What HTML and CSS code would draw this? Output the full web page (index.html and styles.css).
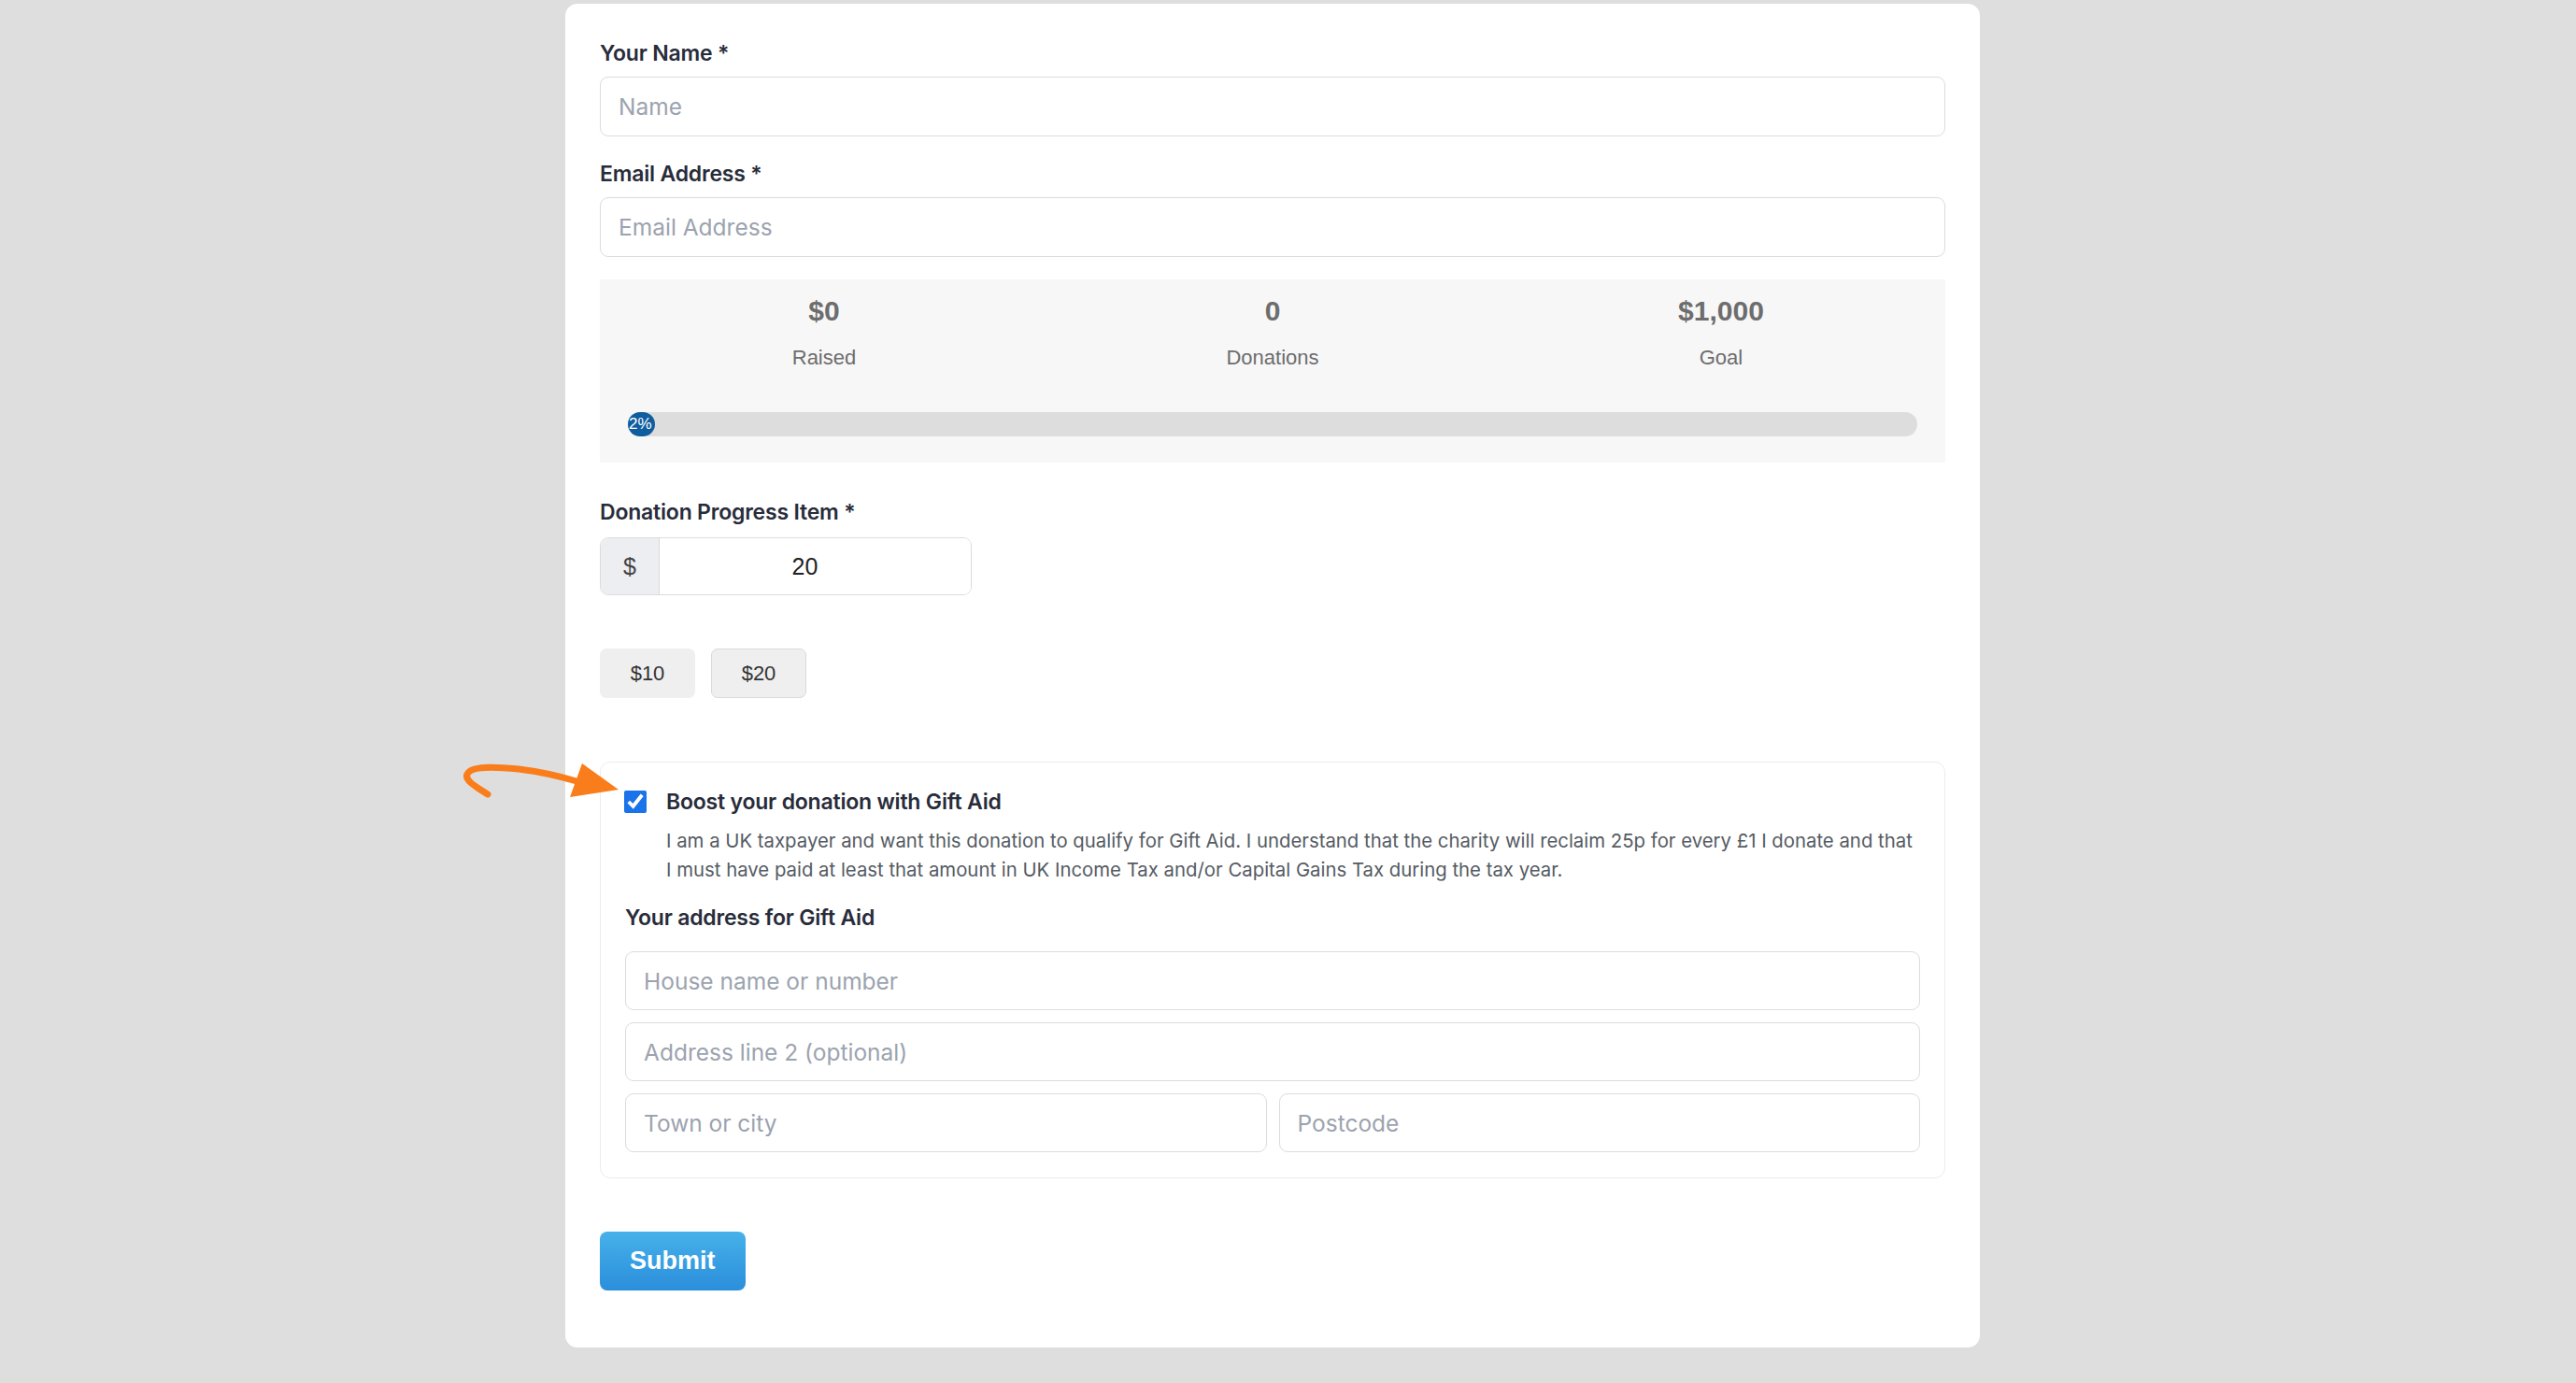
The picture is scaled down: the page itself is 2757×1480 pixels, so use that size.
FILE: index.html
```html
<!DOCTYPE html>
<html lang="en">
<head>
    <meta charset="UTF-8">
    <meta name="viewport" content="width=device-width, initial-scale=1.0">
    <title>Donation Form</title>
    <link rel="stylesheet" href="styles.css">
</head>
<body>
    <form class="donation-card">
        <div class="field">
            <label class="field-label" for="donorName">Your Name *</label>
            <input class="text-input" type="text" id="donorName" placeholder="Name">
        </div>
        <div class="field">
            <label class="field-label" for="donorEmail">Email Address *</label>
            <input class="text-input" type="email" id="donorEmail" placeholder="Email Address">
        </div>

        <div class="progress-panel">
            <div class="stats">
                <div class="stat">
                    <div class="stat-value">$0</div>
                    <div class="stat-label">Raised</div>
                </div>
                <div class="stat">
                    <div class="stat-value">0</div>
                    <div class="stat-label">Donations</div>
                </div>
                <div class="stat">
                    <div class="stat-value">$1,000</div>
                    <div class="stat-label">Goal</div>
                </div>
            </div>
            <div class="progress-track">
                <div class="progress-fill" style="width: 2%">2%</div>
            </div>
        </div>

        <div class="field amount-field">
            <label class="field-label" for="amount">Donation Progress Item *</label>
            <div class="amount-group">
                <span class="currency">$</span>
                <input class="amount-input" type="text" id="amount" value="20">
            </div>
        </div>

        <div class="preset-buttons">
            <button type="button" class="preset">$10</button>
            <button type="button" class="preset selected">$20</button>
        </div>

        <div class="gift-aid">
            <!-- orange pointer arrow -->
            <svg class="gift-arrow" width="170" height="42" viewBox="0 0 170 42">
                <path d="M27 36 C 14 28, 0 20, 6 13 C 12 5, 40 7, 60 9 C 85 12, 105 17, 122 22" fill="none" stroke="#fa7d1b" stroke-width="7" stroke-linecap="round"/>
                <polygon points="128,3 167,31 115,39" fill="#fa7d1b"/>
            </svg>
            <label class="gift-check">
                <input type="checkbox" checked>
                <span class="gift-title">Boost your donation with Gift Aid</span>
            </label>
            <p class="gift-text">I am a UK taxpayer and want this donation to qualify for Gift Aid. I understand that the charity will reclaim 25p for every £1 I donate and that I must have paid at least that amount in UK Income Tax and/or Capital Gains Tax during the tax year.</p>
            <div class="address-title">Your address for Gift Aid</div>
            <div class="address-fields">
                <input class="text-input wide" type="text" placeholder="House name or number">
                <input class="text-input wide" type="text" placeholder="Address line 2 (optional)">
                <input class="text-input" type="text" placeholder="Town or city">
                <input class="text-input" type="text" placeholder="Postcode">
            </div>
        </div>

        <button type="submit" class="submit-btn">Submit</button>
    </form>
</body>
</html>
```

FILE: styles.css
```css
body {
    margin: 0;
    padding: 4px 33px 0 0;
    display: flex;
    justify-content: center;
    align-items: flex-start;
    min-height: 1480px;
    box-sizing: border-box;
    background-color: #dedede;
    font-family: 'Inter', 'Liberation Sans', sans-serif;
}
.donation-card {
    width: 1514px;
    box-sizing: border-box;
    padding: 37px 37px 61px;
    background: #fff;
    border-radius: 13px;
}
.field { margin-top: 24px; }
.field:first-child { margin-top: 0; }
.field-label {
    display: block;
    font-size: 23px;
    line-height: 32px;
    font-weight: 600;
    letter-spacing: -0.2px;
    color: #282c3a;
    margin-bottom: 9px;
}
.text-input {
    display: block;
    width: 100%;
    height: 64px;
    box-sizing: border-box;
    padding: 0 19px;
    border: 1px solid #dcdcde;
    border-radius: 9px;
    font-family: 'Inter', sans-serif;
    font-size: 24.5px;
    color: #222;
    background: #fff;
    outline: none;
}
.text-input::placeholder { color: #9ca3af; }

/* progress box */
.progress-panel {
    margin-top: 24px;
    padding: 18px 30px 28px;
    background: #f7f7f7;
    font-family: 'Liberation Sans', Arial, sans-serif;
}
.stats {
    display: grid;
    grid-template-columns: 1fr 1fr 1fr;
    margin: 0 -30px;
    text-align: center;
    color: #6d6d6d;
}
.stat-value {
    font-size: 30px;
    line-height: 32px;
    font-weight: bold;
}
.stat-label {
    margin-top: 20px;
    font-size: 22px;
    line-height: 28px;
}
.progress-track {
    margin-top: 44px;
    height: 26px;
    border-radius: 13px;
    background: #dddddd;
}
.progress-fill {
    height: 26px;
    border-radius: 13px;
    background: #0f5d9e;
    color: #fff;
    font-size: 17px;
    line-height: 26px;
    padding-left: 1px;
    white-space: nowrap;
}

/* amount */
.amount-field { margin-top: 37px; }
.amount-field .field-label { margin-bottom: 11px; }
.amount-group {
    display: flex;
    width: 398px;
    height: 62px;
    box-sizing: border-box;
    border: 1px solid #dcdcde;
    border-radius: 9px;
    overflow: hidden;
}
.currency {
    width: 62px;
    display: flex;
    justify-content: center;
    align-items: center;
    background: #eceef1;
    border-right: 1px solid #d8d8d8;
    font-family: 'Liberation Sans', Arial, sans-serif;
    font-size: 25px;
    color: #444;
}
.amount-input {
    flex: 1;
    min-width: 0;
    border: none;
    outline: none;
    padding: 0 22px 0 0;
    text-align: center;
    font-family: 'Liberation Sans', Arial, sans-serif;
    font-size: 25px;
    color: #222;
}

.preset-buttons {
    display: flex;
    gap: 17px;
    margin-top: 57px;
}
.preset {
    width: 102px;
    height: 53px;
    border: 1px solid transparent;
    border-radius: 7px;
    background: #efefef;
    font-family: 'Liberation Sans', Arial, sans-serif;
    font-size: 22px;
    color: #333;
    cursor: pointer;
}
.preset.selected { border-color: #dadada; }

/* gift aid */
.gift-aid {
    position: relative;
    margin-top: 68px;
    padding: 26px 26px 27px;
    border: 1px solid #ececec;
    border-radius: 11px;
}
.gift-arrow {
    position: absolute;
    left: -148px;
    top: -2px;
}
.gift-check {
    display: flex;
    align-items: center;
    gap: 21px;
}
.gift-check input {
    width: 24px;
    height: 24px;
    margin: 0 0 0 -1px;
    accent-color: #1a73e8;
}
.gift-title {
    font-size: 23px;
    line-height: 32px;
    font-weight: 600;
    letter-spacing: -0.2px;
    color: #282c3a;
}
.gift-text {
    margin: 10px 0 0 44px;
    font-size: 20.35px;
    line-height: 31px;
    color: #555b63;
}
.address-title {
    margin-top: 20px;
    font-size: 23px;
    line-height: 32px;
    font-weight: 600;
    letter-spacing: -0.2px;
    color: #282c3a;
}
.address-fields {
    display: grid;
    grid-template-columns: 1fr 1fr;
    gap: 13px;
    margin-top: 20px;
}
.address-fields .text-input { height: 63px; }
.address-fields .wide { grid-column: 1 / 3; }

.submit-btn {
    display: block;
    margin-top: 57px;
    height: 63px;
    padding: 0 32px;
    border: none;
    border-radius: 8px;
    background: linear-gradient(#46b1ea, #2b8edb);
    color: #fff;
    font-family: 'Liberation Sans', Arial, sans-serif;
    font-size: 27px;
    font-weight: bold;
    cursor: pointer;
}
```
